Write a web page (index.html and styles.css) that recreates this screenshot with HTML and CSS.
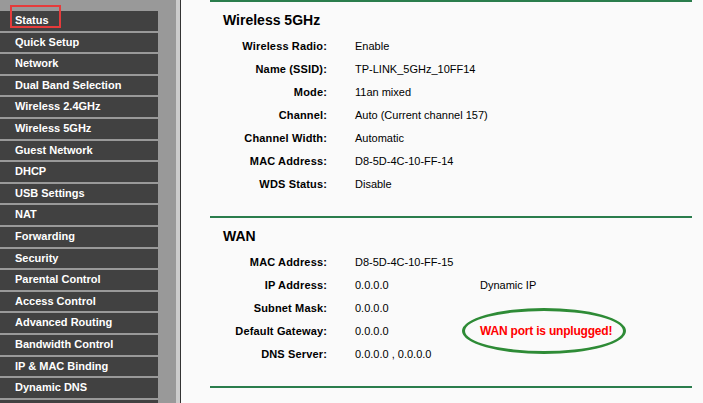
FILE: index.html
```html
<!DOCTYPE html>
<html lang="en">
  <head>
    <meta charset="UTF-8" />
    <title>Status</title>
    <link rel="stylesheet" href="styles.css">
  </head>
  <body>
    <div class="sidebar">
      <ul class="menu">
        <li class="active">Status</li>
        <li>Quick Setup</li>
        <li>Network</li>
        <li>Dual Band Selection</li>
        <li>Wireless 2.4GHz</li>
        <li>Wireless 5GHz</li>
        <li>Guest Network</li>
        <li>DHCP</li>
        <li>USB Settings</li>
        <li>NAT</li>
        <li>Forwarding</li>
        <li>Security</li>
        <li>Parental Control</li>
        <li>Access Control</li>
        <li>Advanced Routing</li>
        <li>Bandwidth Control</li>
        <li>IP &amp; MAC Binding</li>
        <li>Dynamic DNS</li>
        <li></li>
      </ul>
    </div>
    <div class="divider"></div>
    <div class="main">
      <div class="section">
        <h2>Wireless 5GHz</h2>
        <table>
          <tr><td class="key">Wireless Radio:</td><td class="val">Enable</td><td></td></tr>
          <tr><td class="key">Name (SSID):</td><td class="val">TP-LINK_5GHz_10FF14</td><td></td></tr>
          <tr><td class="key">Mode:</td><td class="val">11an mixed</td><td></td></tr>
          <tr><td class="key">Channel:</td><td class="val">Auto (Current channel 157)</td><td></td></tr>
          <tr><td class="key">Channel Width:</td><td class="val">Automatic</td><td></td></tr>
          <tr><td class="key">MAC Address:</td><td class="val">D8-5D-4C-10-FF-14</td><td></td></tr>
          <tr><td class="key">WDS Status:</td><td class="val">Disable</td><td></td></tr>
        </table>
      </div>
      <div class="section">
        <h2>WAN</h2>
        <table>
          <tr><td class="key">MAC Address:</td><td class="val">D8-5D-4C-10-FF-15</td><td></td></tr>
          <tr><td class="key">IP Address:</td><td class="val">0.0.0.0</td><td class="extra">Dynamic IP</td></tr>
          <tr><td class="key">Subnet Mask:</td><td class="val">0.0.0.0</td><td></td></tr>
          <tr><td class="key">Default Gateway:</td><td class="val">0.0.0.0</td><td class="extra"><span class="warn">WAN port is unplugged!</span></td></tr>
          <tr><td class="key">DNS Server:</td><td class="val">0.0.0.0 , 0.0.0.0</td><td></td></tr>
        </table>
      </div>
      <div class="section"></div>
    </div>
  </body>
</html>
```

FILE: styles.css
```css
body {
  margin: 0;
  display: flex;
  height: 403px;
  overflow: hidden;
  background: #fafafa;
  font-family: "Liberation Sans", Arial, sans-serif;
  font-size: 11px;
  color: #000;
}

.sidebar {
  width: 176px;
  flex-shrink: 0;
  background: #999999;
  padding-top: 11px;
}

.menu {
  list-style: none;
  margin: 0;
  padding: 0;
  width: 158px;
}

.menu li {
  position: relative;
  height: 19.6px;
  line-height: 19.6px;
  margin-bottom: 2px;
  padding-left: 15px;
  background: #414141;
  color: #fff;
  font-weight: bold;
  white-space: nowrap;
}

.menu li.active::before {
  content: "";
  position: absolute;
  left: 10px;
  top: -6px;
  width: 47px;
  height: 19px;
  border: 2px solid #e53b3b;
}

.divider {
  width: 4px;
  flex-shrink: 0;
  background: #cccccc;
  border-right: 1px solid #333;
}

.main {
  padding-left: 29px;
  width: 482px;
}

.section {
  border-top: 2px solid #2a7d4c;
  padding-bottom: 21px;
}

h2 {
  margin: 10px 0 5px 13px;
  font-size: 14px;
  line-height: 17px;
}

table {
  border-collapse: collapse;
}

td {
  height: 23px;
  padding: 0;
  white-space: nowrap;
}

.key {
  width: 117px;
  text-align: right;
  font-weight: bold;
  letter-spacing: 0.15px;
}

.val {
  width: 125px;
  padding-left: 28px;
}

.extra {
  position: relative;
}

.warn {
  position: relative;
  color: #ff0000;
  font-weight: bold;
  font-size: 12px;
  letter-spacing: -0.2px;
}

.warn::before {
  content: "";
  position: absolute;
  left: -18px;
  right: -14px;
  top: -16px;
  bottom: -16px;
  border: 3px solid #2e8b36;
  border-radius: 50%;
}
```
